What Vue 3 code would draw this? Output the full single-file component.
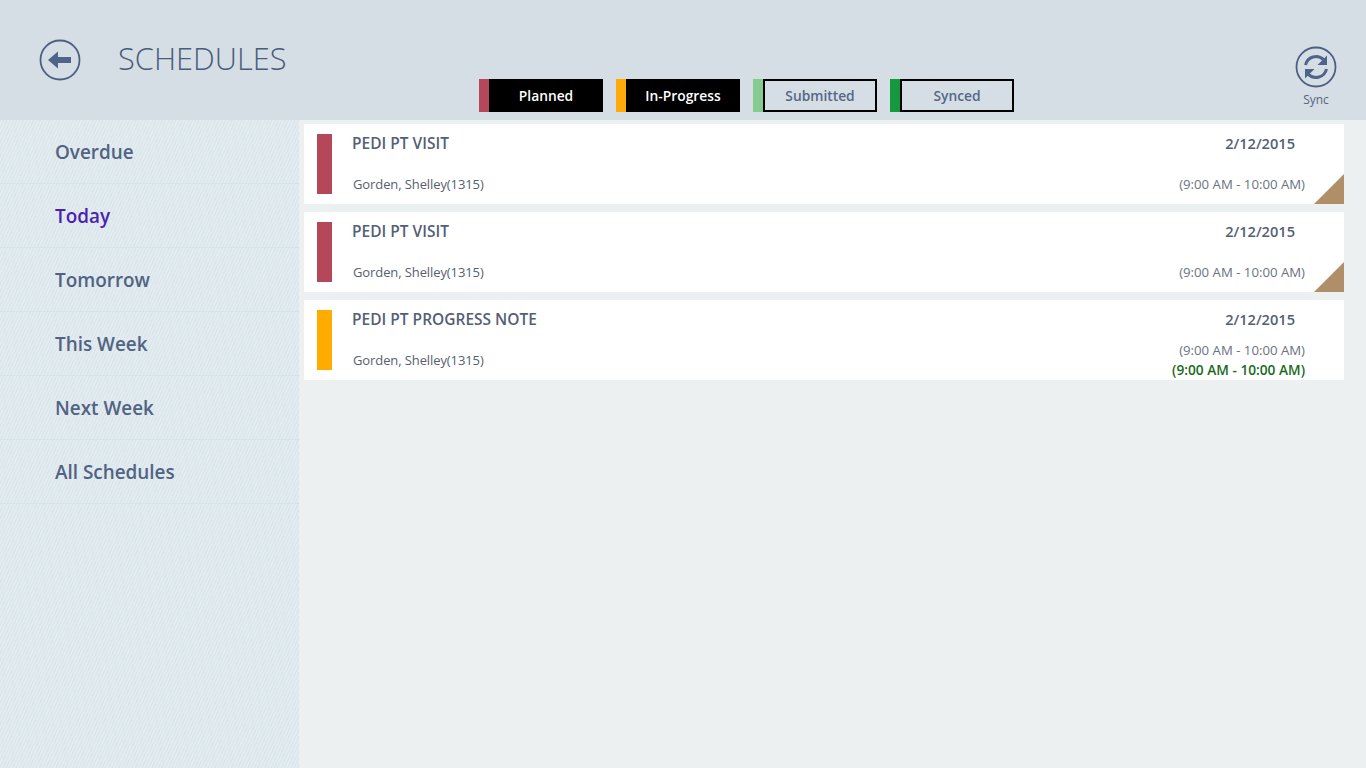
<script setup>
const menu = ["Overdue", "Today", "Tomorrow", "This Week", "Next Week", "All Schedules"];
const legend = [
  { label: "Planned", color: "#b4485a", filled: true },
  { label: "In-Progress", color: "#ffa90a", filled: true },
  { label: "Submitted", color: "#85cc8f", filled: false },
  { label: "Synced", color: "#149a3c", filled: false },
];
const schedules = [
  { title: "PEDI PT VISIT", color: "#b4485a", corner: true },
  { title: "PEDI PT VISIT", color: "#b4485a", corner: true },
  { title: "PEDI PT PROGRESS NOTE", color: "#ffab00", actual: "(9:00 AM - 10:00 AM)" },
];
</script>

<template>
  <div class="page">
    <header class="header">
      <svg class="back" width="42" height="42" viewBox="0 0 42 42">
        <circle cx="21" cy="21" r="19.5" fill="none" stroke="#4e6080" stroke-width="1.8" />
        <path d="M9 21 L19 12.5 L19 18 L32 18 L32 24 L19 24 L19 29.5 Z" fill="#4e6488" />
      </svg>
      <h1 class="title">SCHEDULES</h1>
      <div class="legend">
        <div v-for="item in legend" :key="item.label" class="legend-item">
          <span class="swatch" :style="{ background: item.color }"></span>
          <span class="legend-label" :class="item.filled ? 'filled' : 'outlined'">{{ item.label }}</span>
        </div>
      </div>
      <div class="sync">
        <svg width="42" height="42" viewBox="0 0 42 42">
          <circle cx="21" cy="21" r="19.5" fill="none" stroke="#4e6080" stroke-width="1.8" />
          <path d="M10.5 19 A10.8 10.8 0 0 1 28.6 13.6" fill="none" stroke="#4e6488" stroke-width="3" />
          <path d="M32 9.5 L32 19 L22.5 19 Z" fill="#4e6488" />
          <path d="M31.5 23 A10.8 10.8 0 0 1 13.4 28.4" fill="none" stroke="#4e6488" stroke-width="3" />
          <path d="M10 32.5 L10 23 L19.5 23 Z" fill="#4e6488" />
        </svg>
        <span class="sync-label">Sync</span>
      </div>
    </header>
    <div class="body">
      <nav class="sidebar">
        <div v-for="name in menu" :key="name" class="menu-item" :class="{ active: name === 'Today' }">{{ name }}</div>
      </nav>
      <main class="list">
        <div v-for="(s, i) in schedules" :key="i" class="card">
          <span class="bar" :style="{ background: s.color }"></span>
          <div class="info">
            <div class="card-title">{{ s.title }}</div>
            <div class="patient">Gorden, Shelley(1315)</div>
          </div>
          <div class="when">
            <div class="date">2/12/2015</div>
            <div class="time" :class="{ raised: s.actual }">(9:00 AM - 10:00 AM)</div>
            <div v-if="s.actual" class="actual">{{ s.actual }}</div>
          </div>
          <span v-if="s.corner" class="corner"></span>
        </div>
      </main>
    </div>
  </div>
</template>

<style>
html,
body {
  margin: 0;
  background: #ecf0f1;
}
</style>

<style scoped>
.page {
  width: 1366px;
  height: 768px;
  overflow: hidden;
  display: flex;
  flex-direction: column;
  font-family: "Open Sans", "Noto Sans", sans-serif;
  color: #4e5d78;
}

.header {
  height: 120px;
  flex: none;
  display: flex;
  background: #d5dee5;
  padding-left: 39px;
  box-sizing: border-box;
}

.back {
  margin-top: 39px;
  flex: none;
}

.title {
  margin: 38px 0 0 37px;
  width: 361px;
  flex: none;
  font-size: 30.8px;
  line-height: 40px;
  font-weight: 300;
  color: #4a5c7c;
}

.legend {
  display: flex;
  gap: 13px;
  margin: 79px 0 0 0;
  height: 33px;
}

.legend-item {
  display: flex;
  width: 124px;
}

.swatch {
  width: 10px;
  flex: none;
}

.legend-label {
  flex: 1;
  display: flex;
  align-items: center;
  justify-content: center;
  box-sizing: border-box;
  font-size: 13.8px;
  font-weight: 600;
}

.legend-label.filled {
  background: #000;
  color: #fff;
}

.legend-label.outlined {
  border: 2px solid #000;
  color: #56678a;
}

.sync {
  margin: 46px 0 0 281px;
  width: 42px;
  display: flex;
  flex-direction: column;
  align-items: center;
}

.sync-label {
  font-size: 12px;
  line-height: 16px;
  margin-top: 4px;
  color: #56657c;
}

.body {
  flex: 1;
  display: flex;
  min-height: 0;
}

.sidebar {
  width: 299px;
  flex: none;
  background-color: #e2ebf0;
  background-image: repeating-linear-gradient(115deg, rgba(200, 215, 225, 0.3) 0, rgba(200, 215, 225, 0.3) 1px, transparent 1px, transparent 3px);
}

.menu-item {
  height: 64px;
  box-sizing: border-box;
  padding: 16px 0 0 55px;
  font-size: 18.9px;
  line-height: 32px;
  font-weight: 600;
  color: #516382;
  border-bottom: 1px solid #d8e2e9;
}

.menu-item.active {
  color: #4b1fb0;
}

.list {
  flex: 1;
  padding: 4px 22px 0 5px;
  display: flex;
  flex-direction: column;
  gap: 8px;
}

.card {
  position: relative;
  height: 80px;
  background: #fff;
  display: flex;
  padding: 10px 39px 0 13px;
  box-sizing: border-box;
}

.bar {
  width: 15px;
  height: 60px;
  flex: none;
}

.info {
  flex: 1;
  margin-left: 20px;
}

.card-title {
  margin-top: -1px;
  font-size: 15.5px;
  line-height: 20px;
  font-weight: 600;
  color: #535f75;
}

.patient {
  margin: 21px 0 0 1px;
  font-size: 13px;
  line-height: 20px;
  letter-spacing: -0.1px;
  color: #555f70;
}

.when {
  text-align: right;
}

.date {
  margin-top: -1px;
  font-size: 14.6px;
  line-height: 20px;
  font-weight: 600;
  color: #535f75;
  padding-right: 10px;
}

.time {
  margin-top: 21px;
  font-size: 13.2px;
  line-height: 20px;
  color: #6a7280;
}

.time.raised {
  margin-top: 11px;
}

.actual {
  font-size: 13.7px;
  line-height: 20px;
  font-weight: 600;
  color: #1b6a1e;
}

.corner {
  position: absolute;
  right: 0;
  bottom: 0;
  width: 30px;
  height: 30px;
  background: #b08f68;
  clip-path: polygon(100% 0, 100% 100%, 0 100%);
}
</style>
